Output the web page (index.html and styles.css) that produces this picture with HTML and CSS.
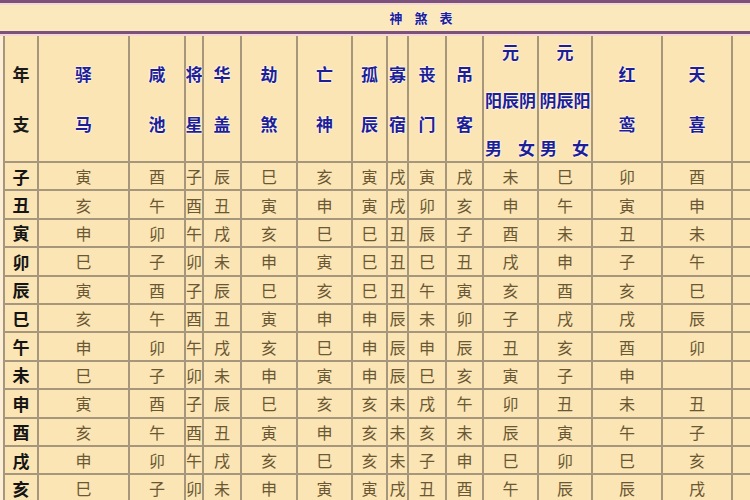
FILE: index.html
```html
<!DOCTYPE html>
<html lang="zh-CN">
<head>
<meta charset="utf-8">
<title>神煞表</title>
<link rel="stylesheet" href="styles.css">
</head>
<body>
<div class="frame">
  <div class="title-bar"><span class="title">神煞表</span></div>
  <div class="gap"></div>
  <div class="grid">
    <div class="hd two k-hd"><span>年</span><span>支</span></div>
    <div class="hd two"><span>驿</span><span>马</span></div>
    <div class="hd two"><span>咸</span><span>池</span></div>
    <div class="hd two"><span>将</span><span>星</span></div>
    <div class="hd two"><span>华</span><span>盖</span></div>
    <div class="hd two"><span>劫</span><span>煞</span></div>
    <div class="hd two"><span>亡</span><span>神</span></div>
    <div class="hd two"><span>孤</span><span>辰</span></div>
    <div class="hd two"><span>寡</span><span>宿</span></div>
    <div class="hd two"><span>丧</span><span>门</span></div>
    <div class="hd two"><span>吊</span><span>客</span></div>
    <div class="hd three"><span>元</span><span>阳辰阴</span><span class="mf"><span>男</span><span>女</span></span></div>
    <div class="hd three"><span>元</span><span>阴辰阳</span><span class="mf"><span>男</span><span>女</span></span></div>
    <div class="hd two"><span>红</span><span>鸾</span></div>
    <div class="hd two"><span>天</span><span>喜</span></div>
    <div class="hd"></div>

    <div class="k">子</div><div class="v">寅</div><div class="v">酉</div><div class="v">子</div><div class="v">辰</div><div class="v">巳</div><div class="v">亥</div><div class="v">寅</div><div class="v">戌</div><div class="v">寅</div><div class="v">戌</div><div class="v">未</div><div class="v">巳</div><div class="v">卯</div><div class="v">酉</div><div class="v"></div>
    <div class="k">丑</div><div class="v">亥</div><div class="v">午</div><div class="v">酉</div><div class="v">丑</div><div class="v">寅</div><div class="v">申</div><div class="v">寅</div><div class="v">戌</div><div class="v">卯</div><div class="v">亥</div><div class="v">申</div><div class="v">午</div><div class="v">寅</div><div class="v">申</div><div class="v"></div>
    <div class="k">寅</div><div class="v">申</div><div class="v">卯</div><div class="v">午</div><div class="v">戌</div><div class="v">亥</div><div class="v">巳</div><div class="v">巳</div><div class="v">丑</div><div class="v">辰</div><div class="v">子</div><div class="v">酉</div><div class="v">未</div><div class="v">丑</div><div class="v">未</div><div class="v"></div>
    <div class="k">卯</div><div class="v">巳</div><div class="v">子</div><div class="v">卯</div><div class="v">未</div><div class="v">申</div><div class="v">寅</div><div class="v">巳</div><div class="v">丑</div><div class="v">巳</div><div class="v">丑</div><div class="v">戌</div><div class="v">申</div><div class="v">子</div><div class="v">午</div><div class="v"></div>
    <div class="k">辰</div><div class="v">寅</div><div class="v">酉</div><div class="v">子</div><div class="v">辰</div><div class="v">巳</div><div class="v">亥</div><div class="v">巳</div><div class="v">丑</div><div class="v">午</div><div class="v">寅</div><div class="v">亥</div><div class="v">酉</div><div class="v">亥</div><div class="v">巳</div><div class="v"></div>
    <div class="k">巳</div><div class="v">亥</div><div class="v">午</div><div class="v">酉</div><div class="v">丑</div><div class="v">寅</div><div class="v">申</div><div class="v">申</div><div class="v">辰</div><div class="v">未</div><div class="v">卯</div><div class="v">子</div><div class="v">戌</div><div class="v">戌</div><div class="v">辰</div><div class="v"></div>
    <div class="k">午</div><div class="v">申</div><div class="v">卯</div><div class="v">午</div><div class="v">戌</div><div class="v">亥</div><div class="v">巳</div><div class="v">申</div><div class="v">辰</div><div class="v">申</div><div class="v">辰</div><div class="v">丑</div><div class="v">亥</div><div class="v">酉</div><div class="v">卯</div><div class="v"></div>
    <div class="k">未</div><div class="v">巳</div><div class="v">子</div><div class="v">卯</div><div class="v">未</div><div class="v">申</div><div class="v">寅</div><div class="v">申</div><div class="v">辰</div><div class="v">巳</div><div class="v">亥</div><div class="v">寅</div><div class="v">子</div><div class="v">申</div><div class="v"></div><div class="v"></div>
    <div class="k">申</div><div class="v">寅</div><div class="v">酉</div><div class="v">子</div><div class="v">辰</div><div class="v">巳</div><div class="v">亥</div><div class="v">亥</div><div class="v">未</div><div class="v">戌</div><div class="v">午</div><div class="v">卯</div><div class="v">丑</div><div class="v">未</div><div class="v">丑</div><div class="v"></div>
    <div class="k">酉</div><div class="v">亥</div><div class="v">午</div><div class="v">酉</div><div class="v">丑</div><div class="v">寅</div><div class="v">申</div><div class="v">亥</div><div class="v">未</div><div class="v">亥</div><div class="v">未</div><div class="v">辰</div><div class="v">寅</div><div class="v">午</div><div class="v">子</div><div class="v"></div>
    <div class="k">戌</div><div class="v">申</div><div class="v">卯</div><div class="v">午</div><div class="v">戌</div><div class="v">亥</div><div class="v">巳</div><div class="v">亥</div><div class="v">未</div><div class="v">子</div><div class="v">申</div><div class="v">巳</div><div class="v">卯</div><div class="v">巳</div><div class="v">亥</div><div class="v"></div>
    <div class="k">亥</div><div class="v">巳</div><div class="v">子</div><div class="v">卯</div><div class="v">未</div><div class="v">申</div><div class="v">寅</div><div class="v">寅</div><div class="v">戌</div><div class="v">丑</div><div class="v">酉</div><div class="v">午</div><div class="v">辰</div><div class="v">辰</div><div class="v">戌</div><div class="v"></div>
  </div>
</div>
</body>
</html>
```

FILE: styles.css
```css
html, body {
  margin: 0;
  padding: 0;
  width: 750px;
  height: 500px;
  overflow: hidden;
  background: #fcefd6;
}

.frame {
  width: 750px;
  overflow: hidden;
  font-family: "Noto Sans CJK SC", "Noto Sans", sans-serif;
}

.title-bar {
  height: 28px;
  border-top: 3px solid #7c527d;
  border-bottom: 3px solid #7c527d;
  background: #fbe8bd;
  box-shadow: inset 0 2px 0 #f3d6d6;
  display: flex;
  align-items: center;
  justify-content: center;
  padding-left: 92px;
}

.title {
  font-size: 13px;
  font-weight: 700;
  color: #1e1e96;
  letter-spacing: 12px;
  padding-left: 12px;
  line-height: 28px;
  padding-top: 2px;
  text-shadow: 0 0 2px #fff, 0 0 1px #fff;
}

.gap {
  height: 2px;
  background: #f3d6d6;
}

.grid {
  display: grid;
  margin-left: 3px;
  grid-template-columns: 32px 89px 54px 16px 36px 54px 53px 33px 19px 36px 35px 53px 52px 68px 68px 17px;
  grid-template-rows: 125px repeat(12, 26.4px);
  gap: 2px;
  padding: 0 0 2px 2px;
  background: #a6967b;
}

.grid > div {
  background: #fbe5b5;
  display: flex;
  align-items: center;
  justify-content: center;
  white-space: nowrap;
  overflow: visible;
  min-width: 0;
}

.hd {
  font-size: 17px;
  font-weight: 700;
  color: #1e1e96;
  text-shadow: 0 0 2px #fff, 0 0 2px #fff;
  line-height: 20px;
}

.grid > .two {
  flex-direction: column;
  justify-content: space-between;
  padding: 28px 0 27px;
  box-sizing: border-box;
}

.grid > .three {
  flex-direction: column;
  justify-content: space-between;
  align-items: stretch;
  text-align: center;
  padding: 6px 0 3px;
  box-sizing: border-box;
}

.mf {
  display: flex;
  justify-content: space-between;
  padding: 0 2px 0 1px;
}

.grid > .k-hd {
  color: #1a1a1a;
  text-shadow: none;
}

.k {
  font-size: 17px;
  font-weight: 700;
  color: #151515;
}

.v {
  font-size: 16px;
  font-weight: 400;
  color: #6a5733;
}
```
